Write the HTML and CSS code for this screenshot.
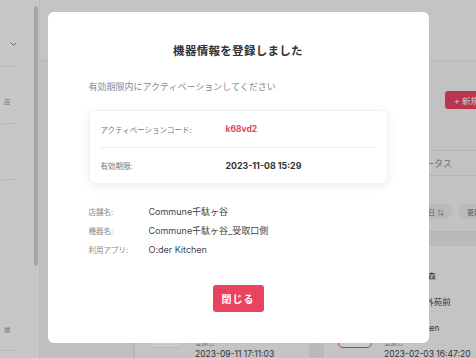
FILE: index.html
```html
<!DOCTYPE html>
<html lang="ja">
<head>
    <meta charset="UTF-8">
    <meta name="viewport" content="width=device-width, initial-scale=1.0">
    <title>端末管理</title>
    <link rel="stylesheet" href="styles.css">
</head>
<body>
    <div class="page">
        <aside class="sidebar">
            <nav class="side-nav">
                <div class="side-item side-toggle">
                    <svg class="chevron" width="7" height="5" viewBox="0 0 7 5"><path d="M1 1l2.5 2.5L6 1" fill="none" stroke="#7a7a7a" stroke-width="1" stroke-linecap="round" stroke-linejoin="round"/></svg>
                </div>
                <div class="side-item side-item-a"><span class="side-text">店</span></div>
                <div class="side-item side-item-b"></div>
                <div class="side-item side-item-c"><span class="side-text">端</span></div>
            </nav>
            <div class="side-scroll"><div class="side-thumb"></div></div>
        </aside>

        <main class="main">
            <div class="main-head"></div>
            <div class="main-body">
                <div class="filter-pane"></div>
                <section class="content">
                    <div class="toolbar">
                        <button class="new-btn">+ 新規登録</button>
                    </div>
                    <div class="table-head">
                        <span></span>
                        <span>ステータス</span>
                    </div>
                    <div class="sort-row">
                        <span class="chip">登録日 ⇅</span>
                        <span class="chip">更新日</span>
                    </div>
                    <div class="cards">
                        <div class="device-card">
                            <div class="card-side"><div class="thumb"></div></div>
                            <div class="card-fields">
                                <div class="field"></div>
                                <div class="field"></div>
                                <div class="field"></div>
                                <div class="field"><div class="field-label">登録日</div><div class="field-value">2023-09-11 17:11:03</div></div>
                            </div>
                        </div>
                        <div class="device-card">
                            <div class="card-side"><div class="outline-btn"></div></div>
                            <div class="card-fields">
                                <div class="field"><div class="field-label">店舗名</div><div class="field-value">Commune 森</div></div>
                                <div class="field"><div class="field-label">機器名</div><div class="field-value">Commune外苑前</div></div>
                                <div class="field"><div class="field-label">利用アプリ</div><div class="field-value">O:der Kitchen</div></div>
                                <div class="field"><div class="field-label">登録日</div><div class="field-value">2023-02-03 16:47:20</div></div>
                            </div>
                        </div>
                    </div>
                </section>
            </div>
        </main>
    </div>

    <div class="overlay">
        <div class="modal">
            <h2 class="modal-title">機器情報を登録しました</h2>
            <p class="modal-lead">有効期限内にアクティベーションしてください</p>

            <div class="code-card">
                <div class="code-row">
                    <span class="code-label">アクティベーションコード:</span>
                    <span class="code-value is-code">k68vd2</span>
                </div>
                <div class="code-row">
                    <span class="code-label">有効期限:</span>
                    <span class="code-value">2023-11-08 15:29</span>
                </div>
            </div>

            <div class="info-list">
                <div class="info-row">
                    <span class="info-label">店舗名:</span>
                    <span class="info-value">Commune千駄ヶ谷</span>
                </div>
                <div class="info-row">
                    <span class="info-label">機器名:</span>
                    <span class="info-value">Commune千駄ヶ谷_受取口側</span>
                </div>
                <div class="info-row">
                    <span class="info-label">利用アプリ:</span>
                    <span class="info-value">O:der Kitchen</span>
                </div>
            </div>

            <button class="close-btn">閉じる</button>
        </div>
    </div>
</body>
</html>
```

FILE: styles.css
```css
* {
    margin: 0;
    padding: 0;
    box-sizing: border-box;
}

body {
    font-family: Inter, "Noto Sans CJK JP", sans-serif;
    color: #333;
    background: #fff;
    width: 476px;
    height: 358px;
    overflow: hidden;
}

/* page behind the dialog */
.page {
    display: flex;
    height: 358px;
    overflow: hidden;
}

.sidebar {
    flex: none;
    width: 40px;
    display: flex;
    background: #f9f9f9;
    border-right: 1px solid #ececec;
}

.side-nav {
    width: 33px;
}

.side-item {
    margin: 0 16px 0 2px;
    border-bottom: 1px solid #e8e8e8;
}

.side-toggle {
    height: 67px;
    padding: 42px 0 0 8px;
}

.chevron {
    display: block;
}

.side-item-a {
    height: 57px;
    padding-top: 31px;
}

.side-item-b {
    height: 56px;
}

.side-item-c {
    height: 171px;
    padding-top: 146px;
}

.side-text {
    display: block;
    font-size: 6px;
    line-height: 8px;
    color: #8a8a8a;
    padding-left: 2px;
}

.side-scroll {
    width: 4px;
    margin-left: 1px;
    padding-top: 6px;
}

.side-thumb {
    height: 260px;
    border-radius: 2px;
    background: #d0d0d0;
}

.main {
    flex: none;
    width: 480px;
    display: flex;
    flex-direction: column;
    background: #f1f1f1;
}

.main-head {
    height: 61px;
    flex: none;
    background: #f5f5f5;
    border-bottom: 1px solid #e6e6e6;
}

.main-body {
    flex: 1;
    display: flex;
}

.filter-pane {
    flex: none;
    width: 95px;
    background: #efefef;
    border-right: 2px solid #e4e4e4;
}

.content {
    flex: 1;
    display: flex;
    flex-direction: column;
    background: #f3f3f3;
}

.toolbar {
    height: 89px;
    display: flex;
    justify-content: flex-end;
    padding: 30px 15px 0 0;
}

.new-btn {
    width: 60px;
    height: 18px;
    border: none;
    border-radius: 3px;
    background: #e8445f;
    color: #fff;
    font-family: inherit;
    font-size: 8.5px;
}

.table-head {
    height: 26px;
    display: grid;
    grid-template-columns: 272px auto;
    align-items: center;
    border-top: 1px solid #e2e2e2;
    border-bottom: 1px solid #e2e2e2;
    font-size: 9px;
    color: #8c8c8c;
}

.sort-row {
    height: 56px;
    display: flex;
    justify-content: flex-end;
    align-items: flex-start;
    gap: 7px;
    padding: 28px 24px 0 0;
    border-bottom: 1px solid #e2e2e2;
}

.chip {
    display: inline-flex;
    align-items: center;
    height: 15px;
    padding: 0 8px;
    border-radius: 8px;
    background: #e8e8e8;
    font-size: 7px;
    color: #777;
}

.cards {
    flex: 1;
    display: grid;
    grid-template-columns: 174px 175px;
    gap: 15px;
    padding-top: 14px;
    background: #e9e9e9;
}

.device-card {
    display: flex;
    gap: 12px;
    height: 150px;
    padding: 14px 0 0 14px;
    border-radius: 4px;
    background: #f6f6f6;
}

.card-side {
    width: 34px;
    padding-top: 58px;
}

.thumb {
    height: 30px;
    border-radius: 5px;
    background: #fdfdfd;
    border: 1px solid #e6e6e6;
}

.outline-btn {
    height: 30px;
    border-radius: 5px;
    background: #fff;
    border: 1px solid #e8445f;
}

.field {
    height: 26px;
    white-space: nowrap;
}

.field-label {
    font-size: 6.5px;
    line-height: 10px;
    color: #999;
}

.field-value {
    font-size: 8.5px;
    line-height: 12px;
    color: #444;
}

/* dialog */
.overlay {
    position: fixed;
    inset: 0;
    display: flex;
    justify-content: center;
    align-items: flex-start;
    padding-top: 12px;
    background: rgba(0, 0, 0, 0.2);
}

.modal {
    width: 381px;
    height: 331px;
    display: flex;
    flex-direction: column;
    padding: 31px 41px 0;
    border-radius: 6px;
    background: #fff;
}

.modal-title {
    font-size: 11.5px;
    line-height: 16px;
    font-weight: 700;
    text-align: center;
    color: #333;
    letter-spacing: 0.3px;
}

.modal-lead {
    margin-top: 22px;
    font-size: 9px;
    line-height: 12px;
    color: #888;
}

.code-card {
    margin-top: 17px;
    padding: 0 11px;
    border: 1px solid #f2f2f2;
    border-radius: 6px;
    box-shadow: 0 2px 10px rgba(0, 0, 0, 0.08);
}

.code-row {
    height: 36px;
    display: flex;
    align-items: center;
}

.code-row + .code-row {
    border-top: 1px solid #ececec;
}

.code-label {
    width: 125px;
    font-size: 7.5px;
    color: #777;
}

.code-value {
    font-size: 8.8px;
    font-weight: 700;
    color: #333;
}

.code-value.is-code {
    font-size: 8.5px;
    color: #e8415c;
}

.info-list {
    margin-top: 18px;
}

.info-row {
    height: 19px;
    display: flex;
    align-items: center;
}

.info-label {
    width: 60px;
    font-size: 7.5px;
    color: #888;
}

.info-value {
    font-size: 9px;
    color: #444;
}

.close-btn {
    width: 51px;
    height: 27px;
    margin: 26px auto 0;
    border: none;
    border-radius: 3px;
    background: #e8445f;
    color: #fff;
    font-family: inherit;
    font-size: 10px;
    font-weight: 700;
    letter-spacing: 1px;
}
```
